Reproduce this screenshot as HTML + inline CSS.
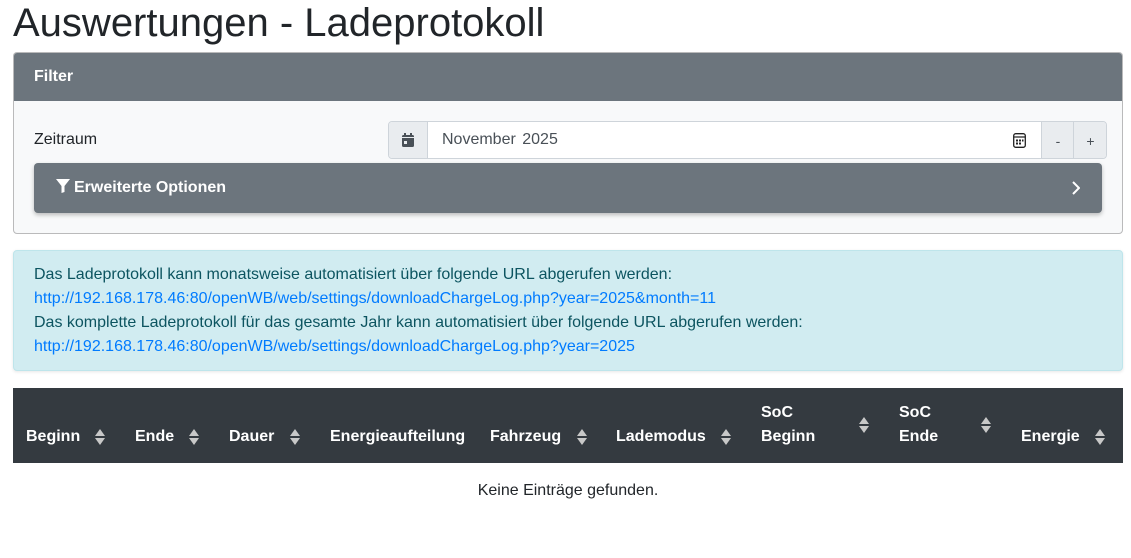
<!DOCTYPE html>
<html><head><meta charset="utf-8"><style>
*{box-sizing:border-box;margin:0;padding:0}
body{width:1131px;height:558px;background:#fff;font-family:"Liberation Sans",Arial,sans-serif;color:#212529;position:relative;overflow:hidden}
.abs{position:absolute}
h1{position:absolute;left:13px;top:-1px;font-size:40px;font-weight:400;line-height:48px}
.card{left:13px;top:52px;width:1110px;height:182px;border:1px solid rgba(0,0,0,.25);border-radius:4px;background:#f8f9fa;overflow:hidden}
.ch{height:48px;background:#6c757d;color:#fff;font-weight:bold;font-size:16px;padding:15px 20px}
.ig{left:388px;top:121px;width:719px;height:38px;border:1px solid #ced4da;border-radius:4px;background:#fff;overflow:hidden}
.pre{position:absolute;top:0;height:36px;background:#e9ecef;color:#495057;text-align:center;line-height:38px;font-size:14px}
.eo{left:34px;top:163px;width:1068px;height:50px;background:#6c757d;border-radius:4px;box-shadow:0 2px 4px rgba(0,0,0,.25);color:#fff;font-weight:bold;font-size:16px;padding:16px 22px}
.alert{left:13px;top:250px;width:1110px;height:121px;background:#d1ecf1;border:1px solid #bee5eb;border-radius:4px;color:#0c5460;font-size:16px;line-height:24px;padding:12px 20px;box-shadow:0 1px 3px rgba(0,0,0,.1)}
.alert a{color:#007bff;text-decoration:none}
.th{left:13px;top:388px;width:1110px;height:75px;background:#343a40}
.t{position:absolute;color:#fff;font-weight:bold;font-size:16px;line-height:24px}
.ar{position:absolute;width:10px;height:16px}
</style></head><body>
<h1>Auswertungen - Ladeprotokoll</h1>
<div class="abs card"><div class="ch">Filter</div></div>
<div class="abs" style="left:34px;top:131px;font-size:16px">Zeitraum</div>
<div class="abs ig">
 <div class="pre" style="left:0;width:39px;border-right:1px solid #ced4da"><svg width="12" height="14" viewBox="0 0 12 14" style="margin-top:11px"><rect x="2" y="0" width="2" height="3" fill="#495057"/><rect x="8" y="0" width="2" height="3" fill="#495057"/><rect x="0" y="2" width="12" height="12" rx="1.5" fill="#495057"/><rect x="0" y="4" width="12" height="1" fill="#e9ecef"/><rect x="2" y="8" width="3" height="3" fill="#e9ecef"/></svg></div>
 <div class="abs" style="left:53px;top:9px;font-size:16px;color:#495057;word-spacing:2px">November 2025</div>
 <svg class="abs" style="left:624px;top:11px" width="13" height="15" viewBox="0 0 13 15"><rect x="0.7" y="0.7" width="11.6" height="13.6" rx="2" fill="none" stroke="#222" stroke-width="1.3"/><line x1="1" y1="4" x2="12" y2="4" stroke="#222" stroke-width="1.2"/><rect x="3" y="6.5" width="2" height="2" fill="#222"/><rect x="6" y="6.5" width="2" height="2" fill="#222"/><rect x="9" y="6.5" width="1.5" height="2" fill="#222"/><rect x="3" y="9.5" width="2" height="2" fill="#222"/><rect x="6" y="9.5" width="2" height="2" fill="#222"/></svg>
 <div class="pre" style="left:652px;width:33px;border-left:1px solid #ced4da">-</div>
 <div class="pre" style="left:684px;width:34px;border-left:1px solid #ced4da">+</div>
</div>
<div class="abs eo"><svg width="14" height="14" viewBox="0 0 14 14" style="vertical-align:-1px;margin-right:4px"><path d="M0 0H14L8.5 7V13L5.5 14V7Z" fill="#fff"/></svg>Erweiterte Optionen
<svg class="abs" style="right:22px;top:18px" width="8" height="14" viewBox="0 0 8 14"><path d="M1 1L7 7L1 13" stroke="#fff" stroke-width="2" fill="none"/></svg></div>
<div class="abs alert">Das Ladeprotokoll kann monatsweise automatisiert über folgende URL abgerufen werden:<br><a>http://192.168.178.46:80/openWB/web/settings/downloadChargeLog.php?year=2025&amp;month=11</a><br>Das komplette Ladeprotokoll für das gesamte Jahr kann automatisiert über folgende URL abgerufen werden:<br><a>http://192.168.178.46:80/openWB/web/settings/downloadChargeLog.php?year=2025</a></div>
<div class="abs th"></div>
<div class="t" style="left:26px;top:425px">Beginn</div>
<div class="t" style="left:135px;top:425px">Ende</div>
<div class="t" style="left:229px;top:425px">Dauer</div>
<div class="t" style="left:330px;top:425px">Energieaufteilung</div>
<div class="t" style="left:490px;top:425px">Fahrzeug</div>
<div class="t" style="left:616px;top:425px">Lademodus</div>
<div class="t" style="left:761px;top:401px">SoC<br>Beginn</div>
<div class="t" style="left:899px;top:401px">SoC<br>Ende</div>
<div class="t" style="left:1021px;top:425px">Energie</div>
<svg width="0" height="0" style="position:absolute"><defs><g id="s"><path d="M0 7L5 0L10 7Z" fill="#c8c8c8"/><path d="M0 9L5 16L10 9Z" fill="#c8c8c8"/></g></defs></svg>
<svg class="ar" style="left:95px;top:429px"><use href="#s"/></svg>
<svg class="ar" style="left:189px;top:429px"><use href="#s"/></svg>
<svg class="ar" style="left:290px;top:429px"><use href="#s"/></svg>
<svg class="ar" style="left:577px;top:429px"><use href="#s"/></svg>
<svg class="ar" style="left:721px;top:429px"><use href="#s"/></svg>
<svg class="ar" style="left:859px;top:417px"><use href="#s"/></svg>
<svg class="ar" style="left:981px;top:417px"><use href="#s"/></svg>
<svg class="ar" style="left:1095px;top:429px"><use href="#s"/></svg>
<div class="abs" style="left:13px;width:1110px;top:482px;text-align:center;font-size:16px">Keine Einträge gefunden.</div>
</body></html>
